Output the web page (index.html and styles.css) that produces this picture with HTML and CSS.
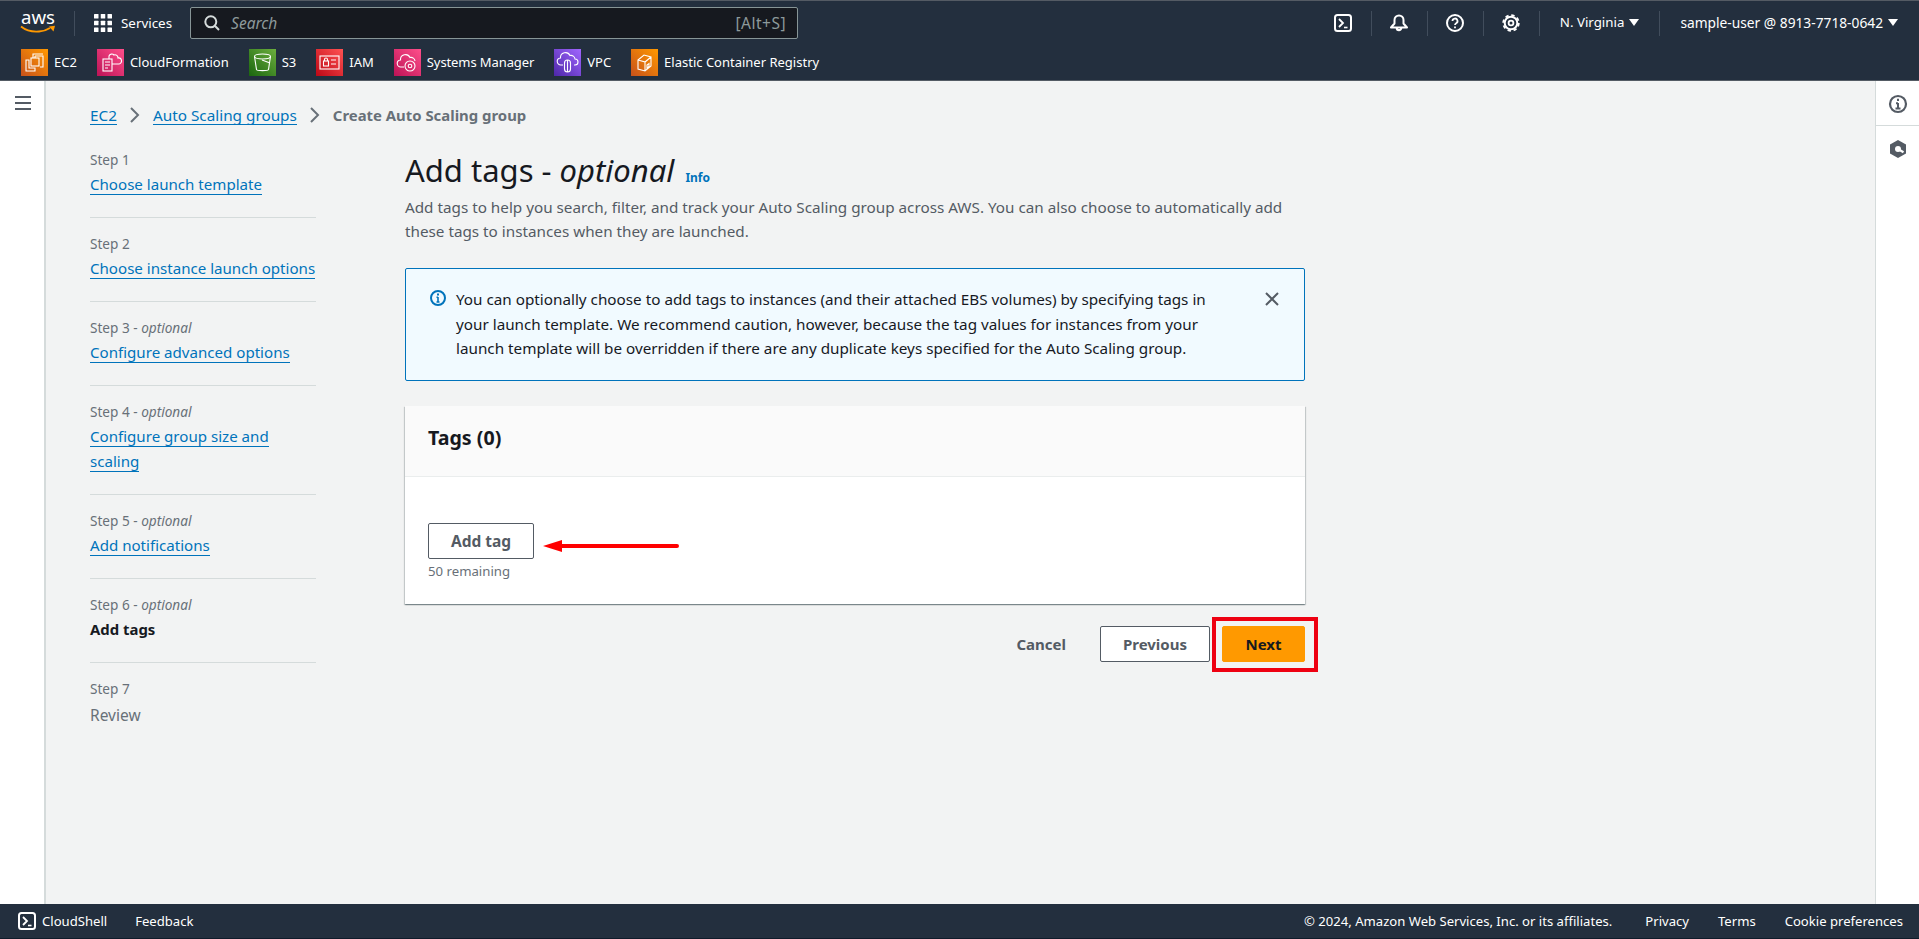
FILE: index.html
```html
<!DOCTYPE html>
<html lang="en">
<head>
<meta charset="utf-8">
<title>Create Auto Scaling group</title>
<link rel="stylesheet" href="styles.css">
</head>
<body>
<svg width="0" height="0" class="defs">
  <defs>
    <linearGradient id="g-orange" x1="0" y1="1" x2="1" y2="0"><stop offset="0" stop-color="#c8511b"/><stop offset="1" stop-color="#ff9900"/></linearGradient>
    <linearGradient id="g-pink" x1="0" y1="1" x2="1" y2="0"><stop offset="0" stop-color="#bc1356"/><stop offset="1" stop-color="#ff4f8b"/></linearGradient>
    <linearGradient id="g-green" x1="0" y1="1" x2="1" y2="0"><stop offset="0" stop-color="#1b660f"/><stop offset="1" stop-color="#6cae3e"/></linearGradient>
    <linearGradient id="g-red" x1="0" y1="1" x2="1" y2="0"><stop offset="0" stop-color="#bd0816"/><stop offset="1" stop-color="#ff5252"/></linearGradient>
    <linearGradient id="g-purple" x1="0" y1="1" x2="1" y2="0"><stop offset="0" stop-color="#4d27a8"/><stop offset="1" stop-color="#a166ff"/></linearGradient>
  </defs>
</svg>
<div class="app">
  <header class="topnav">
    <div class="nav-row nav-row-main">
      <svg class="aws-logo" width="36" height="22" viewBox="0 0 36 22">
        <text x="1" y="12" class="aws-word" textLength="34" lengthAdjust="spacingAndGlyphs">aws</text>
        <path d="M1 14.500c5 4 12 5.500 18 5 4-.3 8-1.500 11-3.500" fill="none" stroke="#f90" stroke-width="1.800"/>
        <path d="M29 14.500l6-.8-1.500 5.800z" fill="#f90"/>
      </svg>
      <span class="vsep vsep-logo"></span>
      <svg class="grid-icon" width="18" height="18" viewBox="0 0 18 18" fill="#fff">
        <rect width="4.500" height="4.500" rx=".5"/><rect x="6.750" width="4.500" height="4.500" rx=".5"/><rect x="13.500" width="4.500" height="4.500" rx=".5"/>
        <rect y="6.750" width="4.500" height="4.500" rx=".5"/><rect x="6.750" y="6.750" width="4.500" height="4.500" rx=".5"/><rect x="13.500" y="6.750" width="4.500" height="4.500" rx=".5"/>
        <rect y="13.500" width="4.500" height="4.500" rx=".5"/><rect x="6.750" y="13.500" width="4.500" height="4.500" rx=".5"/><rect x="13.500" y="13.500" width="4.500" height="4.500" rx=".5"/>
      </svg>
      <span class="services">Services</span>
      <div class="search">
        <svg width="16" height="16" viewBox="0 0 16 16" fill="none" stroke="#d5dbdb" stroke-width="2"><circle cx="6.800" cy="6.800" r="5.500"/><path d="M10.800 10.800L15 15"/></svg>
        <span class="search-text">Search</span>
        <span class="search-key">[Alt+S]</span>
      </div>
      <div class="nav-right">
        <svg class="nav-ico" width="18" height="18" viewBox="0 0 18 18" fill="none" stroke="#fff" stroke-width="2"><rect x="1" y="1" width="16" height="16" rx="2.500"/><path d="M5 5l4 4-4 4" stroke-width="1.800"/><path d="M10 13.500h3.500" stroke-width="1.600"/></svg>
        <span class="vsep"></span>
        <svg class="nav-ico" width="18" height="18" viewBox="0 0 18 18" fill="none" stroke="#fff" stroke-width="2"><path d="M1 13.500h16l-3.500-4V6a4.500 4.500 0 0 0-9 0v3.500z" stroke-linejoin="round"/><path d="M6.800 14a2.200 2.200 0 0 0 4.400 0" stroke-width="2.200"/></svg>
        <span class="vsep"></span>
        <svg class="nav-ico" width="18" height="18" viewBox="0 0 18 18" fill="none" stroke="#fff" stroke-width="2"><circle cx="9" cy="9" r="8"/><path d="M6.500 7a2.500 2.500 0 1 1 3.700 2.200c-.8.500-1.200 1-1.200 1.800" stroke-width="1.800"/><path d="M9 12.500v1.800" stroke-width="1.800"/></svg>
        <span class="vsep"></span>
        <svg class="nav-ico" width="18" height="18" viewBox="0 0 18 18" fill="none" stroke="#fff"><circle cx="9" cy="9" r="6.300" stroke-width="2"/><circle cx="9" cy="9" r="7.800" stroke-width="1.800" stroke-dasharray="3.400 2.730"/><circle cx="9" cy="9" r="2.400" stroke-width="1.800"/></svg>
        <span class="vsep"></span>
        <span class="nav-menu nav-region">N. Virginia<i class="caret"></i></span>
        <span class="vsep"></span>
        <span class="nav-menu nav-user">sample-user @ 8913-7718-0642<i class="caret"></i></span>
      </div>
    </div>
    <div class="nav-row nav-row-short">
      <a class="short"><svg width="27" height="27" viewBox="0 0 27 27"><rect width="27" height="27" fill="url(#g-orange)"/><g fill="none" stroke="#fff" stroke-width="1.100"><rect x="10" y="9" width="8" height="8"/><path d="M8 19V11H5v11h9v-3zM14 7h8v11h-3M14 7v2M12 9V5h10"/></g></svg><span>EC2</span></a>
      <a class="short"><svg width="27" height="27" viewBox="0 0 27 27"><rect width="27" height="27" fill="url(#g-pink)"/><g fill="none" stroke="#fff" stroke-width="1.100"><rect x="6" y="10" width="9" height="12"/><path d="M8 13h5M8 16h5M8 19h3M12 10V7a3 3 0 0 1 5-1 3 3 0 0 1 4 3 3 3 0 0 1 1 6h-7"/></g></svg><span>CloudFormation</span></a>
      <a class="short"><svg width="27" height="27" viewBox="0 0 27 27"><rect width="27" height="27" fill="url(#g-green)"/><g fill="none" stroke="#fff" stroke-width="1.100"><ellipse cx="13.500" cy="7.500" rx="8" ry="2.500"/><path d="M5.500 7.500l2 13c.2 1.500 11.800 1.500 12 0l2-13M13 11l8 3"/></g></svg><span>S3</span></a>
      <a class="short"><svg width="27" height="27" viewBox="0 0 27 27"><rect width="27" height="27" fill="url(#g-red)"/><g fill="none" stroke="#fff" stroke-width="1.100"><rect x="4" y="7" width="19" height="13"/><rect x="7.500" y="12" width="5" height="5"/><path d="M8.500 12v-1.500a1.500 1.500 0 0 1 3 0V12M15 11h5M15 15h5"/></g></svg><span>IAM</span></a>
      <a class="short short-tight"><svg width="27" height="27" viewBox="0 0 27 27"><rect width="27" height="27" fill="url(#g-pink)"/><g fill="none" stroke="#fff" stroke-width="1.100"><path d="M10 18H7a3.500 3.500 0 0 1-.5-7 5 5 0 0 1 9.500-2.500 4 4 0 0 1 5 3.500"/><circle cx="16" cy="17" r="5"/><circle cx="16" cy="17" r="1.800"/></g></svg><span>Systems Manager</span></a>
      <a class="short"><svg width="27" height="27" viewBox="0 0 27 27"><rect width="27" height="27" fill="url(#g-purple)"/><g fill="none" stroke="#fff" stroke-width="1.100"><path d="M9 16H7a3.500 3.500 0 0 1-.5-7 5 5 0 0 1 9.500-2.500 4 4 0 0 1 5 3.500 3 3 0 0 1 0 6h-1"/><rect x="10.500" y="11" width="6" height="12" rx="3"/><path d="M13.500 11v12"/></g></svg><span>VPC</span></a>
      <a class="short"><svg width="27" height="27" viewBox="0 0 27 27"><rect width="27" height="27" fill="url(#g-orange)"/><g fill="none" stroke="#fff" stroke-width="1.100"><path d="M7 11l6-5 7 2v9l-6 5-7-2zM7 11l7 2v9M14 13l6-5M16 16v3l2-1.500v-3z"/></g></svg><span>Elastic Container Registry</span></a>
    </div>
  </header>

  <div class="body-row">
    <aside class="left-rail">
      <svg width="16" height="14" viewBox="0 0 16 14" fill="none" stroke="#545b64" stroke-width="2"><path d="M0 1h16M0 7h16M0 13h16"/></svg>
    </aside>

    <main class="main">
      <nav class="crumbs">
        <a class="link">EC2</a>
        <svg class="chev" width="12" height="16" viewBox="0 0 12 16" fill="none" stroke="#687078" stroke-width="2"><path d="M2 1l7 7-7 7"/></svg>
        <a class="link">Auto Scaling groups</a>
        <svg class="chev" width="12" height="16" viewBox="0 0 12 16" fill="none" stroke="#687078" stroke-width="2"><path d="M2 1l7 7-7 7"/></svg>
        <span class="crumb-now">Create Auto Scaling group</span>
      </nav>

      <div class="wizard">
        <ol class="steps">
          <li class="step"><small>Step 1</small><a class="link">Choose launch template</a></li>
          <li class="step"><small>Step 2</small><a class="link">Choose instance launch options</a></li>
          <li class="step"><small>Step 3 - <em>optional</em></small><a class="link">Configure advanced options</a></li>
          <li class="step"><small>Step 4 - <em>optional</em></small><a class="link">Configure group size and scaling</a></li>
          <li class="step"><small>Step 5 - <em>optional</em></small><a class="link">Add notifications</a></li>
          <li class="step"><small>Step 6 - <em>optional</em></small><b>Add tags</b></li>
          <li class="step"><small>Step 7</small><span class="muted">Review</span></li>
        </ol>

        <section class="content">
          <h1>Add tags - <em>optional</em> <a class="info">Info</a></h1>
          <p class="lead">Add tags to help you search, filter, and track your Auto Scaling group across AWS. You can also choose to automatically add these tags to instances when they are launched.</p>

          <div class="alert">
            <svg class="alert-ico" width="16" height="16" viewBox="0 0 16 16" fill="none" stroke="#0073bb" stroke-width="2"><circle cx="8" cy="8" r="7"/><path d="M8 7v5M6.500 12h3M6.500 7.300H8" stroke-width="1.600"/><path d="M8 3.500v2"/></svg>
            <p>You can optionally choose to add tags to instances (and their attached EBS volumes) by specifying tags in your launch template. We recommend caution, however, because the tag values for instances from your launch template will be overridden if there are any duplicate keys specified for the Auto Scaling group.</p>
            <svg class="alert-x" width="16" height="16" viewBox="0 0 16 16" fill="none" stroke="#545b64" stroke-width="2"><path d="M2 2l12 12M14 2L2 14"/></svg>
          </div>

          <div class="card">
            <div class="card-head"><h2>Tags (0)</h2></div>
            <div class="card-body">
              <div class="add-wrap">
                <button class="btn btn-add">Add tag</button>
                <svg class="arrow" width="136" height="16" viewBox="0 0 136 16"><path d="M0 8l19-6v4h115a2 2 0 0 1 0 4H19v4z" fill="#f00"/></svg>
              </div>
              <div class="remaining">50 remaining</div>
            </div>
          </div>

          <div class="actions">
            <button class="btn-plain">Cancel</button>
            <button class="btn">Previous</button>
            <button class="btn btn-primary">Next</button>
          </div>
        </section>
      </div>
    </main>

    <aside class="right-rail">
      <div class="rail-cell">
        <svg width="20" height="20" viewBox="0 0 20 20" fill="none" stroke="#545b64" stroke-width="2.200"><circle cx="10" cy="10" r="8"/><path d="M10 9v5.500M7.500 14.500h5M8 9.300h2M10 4.800v2.200" stroke-width="2"/></svg>
      </div>
      <div class="rail-cell">
        <svg width="16" height="18" viewBox="0 0 16 18"><path d="M8 0l8 4.500v9L8 18l-8-4.500v-9z" fill="#545b64"/><circle cx="8" cy="9" r="3" fill="#fff"/><path d="M8 9l5.500 3.200" stroke="#fff" stroke-width="2.200"/></svg>
      </div>
    </aside>
  </div>

  <footer class="foot">
    <svg width="18" height="18" viewBox="0 0 18 18" fill="none" stroke="#fff" stroke-width="2"><rect x="1" y="1" width="16" height="16" rx="2.500"/><path d="M5 5l4 4-4 4" stroke-width="1.800"/><path d="M10 13.500h3.500" stroke-width="1.600"/></svg>
    <span class="foot-shell">CloudShell</span>
    <span class="foot-feedback">Feedback</span>
    <div class="foot-right">
      <span>© 2024, Amazon Web Services, Inc. or its affiliates.</span>
      <span>Privacy</span>
      <span>Terms</span>
      <span>Cookie preferences</span>
    </div>
  </footer>
</div>
</body>
</html>
```

FILE: styles.css
```css
*, *::after { box-sizing: border-box; }
html, body { margin: 0; padding: 0; height: 100%; }
body { font-family: "Noto Sans", "Open Sans", sans-serif; font-size: 15.100px; color: #16191f; background: #f2f3f3; overflow: hidden; }
.defs { position: absolute; }
.app { display: flex; flex-direction: column; height: 939px; }

.topnav { height: 81px; flex: none; background: #232f3e; color: #fff; border-top: 1px solid #545b64; border-bottom: 1px solid #545b64; }
.nav-row { display: flex; align-items: center; }
.nav-row-main { height: 44px; padding-left: 20px; }
.aws-logo { display: block; overflow: visible; }
.aws-word { font-size: 18px; fill: #fff; font-family: "Noto Sans", sans-serif; }
.vsep { width: 1px; height: 25px; background: #414d5c; flex: none; }
.vsep-logo { margin-left: 18px; margin-right: 19px; }
.services { margin-left: 9px; font-size: 13.400px; }
.search { margin-left: 18px; width: 608px; height: 32px; display: flex; align-items: center; background: #16191f; border: 1px solid #879596; border-radius: 2px; padding: 0 11px 0 13px; color: #8d9a9b; }
.search-text { font-style: italic; margin-left: 11px; font-size: 15.500px; }
.search-key { margin-left: auto; font-size: 15.500px; letter-spacing: .5px; }
.nav-right { display: flex; align-items: center; margin-left: auto; padding-right: 21px; }
.nav-ico { margin: 0 18.500px; flex: none; }
.nav-right .nav-ico:first-child { margin-left: 0; }
.nav-menu { display: inline-flex; align-items: center; gap: 5px; margin-top: -2px; white-space: nowrap; }
.nav-region { margin-left: 20px; margin-right: 20px; font-size: 13.300px; }
.nav-user { margin-left: 20px; font-size: 13.750px; }
.caret { width: 0; height: 0; border-left: 5px solid transparent; border-right: 5px solid transparent; border-top: 7px solid #fff; }

.nav-row-short { height: 35px; padding-left: 21px; gap: 20px; }
.short { display: flex; align-items: center; gap: 6px; color: #fff; font-size: 13px; }
.short svg { display: block; flex: none; }
.short span { margin-top: -2px; }
.short-tight { letter-spacing: -.1px; }

.body-row { flex: 1; display: flex; min-height: 0; }
.left-rail { width: 46px; flex: none; background: #fff; border-right: 2px solid #d5dbdb; padding: 15px 0 0 15px; }
.left-rail svg { display: block; }
.right-rail { width: 44px; flex: none; background: #fff; border-left: 1px solid #d5dbdb; }
.rail-cell { height: 45px; display: flex; align-items: center; justify-content: center; border-bottom: 1px solid #d5dbdb; padding-top: 1px; }
.rail-cell:last-child { border-bottom: 0; }

.main { flex: 1; padding: 22px 0 0 44px; min-width: 0; }
.link { color: #0073bb; border-bottom: 1px solid #0073bb; }
.crumbs { display: flex; align-items: center; height: 24px; font-size: 15.300px; line-height: 18px; }
.chev { margin: 0 12px 0 12px; }
.crumb-now { font-size: 14.900px; font-weight: 700; color: #687078; }

.wizard { display: flex; margin-top: 21px; }
.steps { list-style: none; margin: 0; padding: 0; width: 226px; flex: none; }
.step { padding: 0 0 20px; margin-bottom: 14px; border-bottom: 1px solid #d5dbdb; line-height: 25px; }
.step:last-child { border-bottom: 0; }
.step small { display: block; font-size: 13.600px; line-height: 24px; color: #687078; }
.step em { font-style: italic; }
.step b { font-weight: 700; font-size: 14.900px; }
.muted { display: inline-block; margin-top: 2px; color: #687078; font-size: 15.500px; }

.content { margin-left: 89px; width: 900px; padding-top: 3px; font-size: 15.250px; }
h1 { margin: 0; font-size: 31px; font-weight: 400; line-height: 38px; }
h1 em { font-style: italic; }
.info { font-size: 12px; font-weight: 700; color: #0073bb; margin-left: 3px; }
.lead { margin: -2.500px 0 0; line-height: 24.500px; color: #545b64; }
.alert { margin-top: 24.500px; height: 113px; display: flex; align-items: flex-start; background: #f1faff; border: 1px solid #0073bb; border-radius: 2px; padding: 18px 24px 0 24px; }
.alert-ico { flex: none; margin: 3px 10px 0 0; }
.alert p { margin: 0; width: 752px; line-height: 24.500px; }
.alert-x { flex: none; margin: 4px 0 0 auto; }

.card { margin-top: 25px; height: 198px; background: #fff; box-shadow: 0 1px 1px 0 rgba(0,28,36,.3), 1px 1px 1px 0 rgba(0,28,36,.15), -1px 1px 1px 0 rgba(0,28,36,.15); }
.card-head { height: 71px; background: #fafafa; border-bottom: 1px solid #eaeded; display: flex; align-items: center; padding: 0 0 8px 23px; }
h2 { margin: 0; font-size: 19.600px; font-weight: 700; }
.card-body { padding: 46px 0 0 23px; }
.add-wrap { display: flex; align-items: center; }
.arrow { margin: 10px 0 0 9px; }
.remaining { font-size: 13.200px; line-height: 20px; color: #687078; margin-top: 2px; }

.btn { height: 36px; padding: 0 22px; background: #fff; border: 1px solid #545b64; border-radius: 2px; color: #545b64; font: 700 15px "Noto Sans", sans-serif; }
.btn-add { font-size: 15.500px; }
.btn-plain { height: 36px; background: none; border: 0; padding: 0 22px; color: #545b64; font: 700 15px "Noto Sans", sans-serif; }
.btn-primary { background: #ff9900; border-color: #ff9900; color: #16191f; width: 83px; padding: 0; }
.actions { display: flex; justify-content: flex-end; align-items: center; gap: 12px; margin-top: 22px; position: relative; }
.actions::after { content: ""; position: absolute; right: -13px; top: -9px; width: 106px; height: 55px; border: 4px solid #ee0011; pointer-events: none; }

.foot { height: 35px; flex: none; background: #232f3e; color: #fff; display: flex; align-items: center; padding-left: 18px; font-size: 13.100px; border-bottom: 1px solid #0f1b2a; }
.foot svg { display: block; flex: none; }
.foot-shell { margin-left: 6px; }
.foot-feedback { margin-left: 28px; }
.foot-right { margin-left: auto; padding-right: 16px; display: flex; gap: 29px; }
.foot-right span:first-child { margin-right: 4px; }
```
